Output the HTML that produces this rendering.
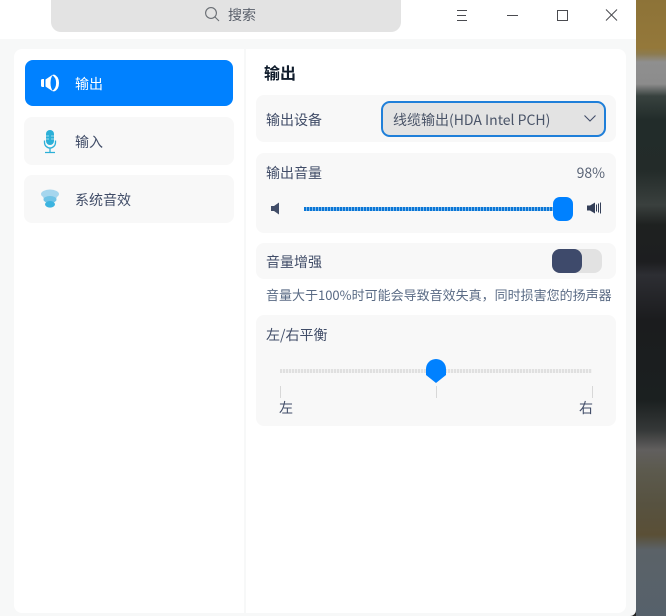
<!DOCTYPE html>
<html lang="zh"><head><meta charset="utf-8"><style>
html,body{margin:0;padding:0;width:666px;height:616px;overflow:hidden;background:#222}
*{box-sizing:border-box}
body{position:relative;font-family:"Noto Sans CJK SC","Liberation Sans",sans-serif;font-size:14px;color:#414d68}
.a{position:absolute}
.t{position:absolute;line-height:20px;white-space:nowrap}
.card{position:absolute;background:#f8f8f8;border-radius:8px}
#wall{left:636px;top:0;width:30px;height:616px;background:linear-gradient(180deg,#8d7338 0,#94783a 48px,#8c7b50 54px,#8f8f8f 62px,#8c8c8c 84px,#38423f 96px,#222c2a 120px,#232b29 170px,#3a403e 205px,#1e2120 225px,#1d1e20 262px,#2d2e33 275px,#1b1c1e 320px,#1b2020 400px,#353838 430px,#615f5e 450px,#5c5a4e 470px,#575240 505px,#5a4f36 535px,#5b6268 550px,#56616b 616px)}
</style></head><body>
<div class="a" id="wall"></div>
<div class="a" style="left:0;top:0;width:636px;height:616px;background:#f7f8f8;border-radius:0 0 6px 0"></div>
<div class="a" style="left:0;top:0;width:636px;height:39px;background:#fff"></div>
<div class="a" style="left:51px;top:0;width:350px;height:32px;background:#e3e3e3;border-radius:0 0 10px 10px"></div>
<svg class="a" style="left:204px;top:6px" width="16" height="16" viewBox="0 0 16 16" fill="none" stroke="#6a6e74" stroke-width="1.1"><circle cx="7" cy="7" r="5.4"/><path d="M11 11l4 4"/></svg>
<div class="t" style="left:228px;top:5px;color:#5a606b">搜索</div>
<svg class="a" style="left:450px;top:0" width="180" height="30" fill="none" stroke="#4a4b50" stroke-width="1"><path d="M7 10.500h10M7 15.500h9M7 20.500h10"/><path d="M57 15.500h11"/><path d="M107.500 10.500h10v10h-10z"/><path d="M156 9.500l11 11M167 9.500l-11 11"/></svg>

<div class="a" style="left:14px;top:49px;width:230px;height:564px;background:#fff;border-radius:8px 0 0 8px"></div>
<div class="a" style="left:246px;top:49px;width:380px;height:564px;background:#fff;border-radius:0 8px 8px 0"></div>

<div class="a" style="left:25px;top:60px;width:208px;height:46px;background:#0081ff;border-radius:8px"></div>
<svg class="a" style="left:40px;top:73px" width="20" height="20" viewBox="0 0 20 20"><path d="M1 7.500Q1 6 2.500 6H4v8H2.500Q1 14 1 12.500z" fill="#fff"/><path d="M5.500 6.500L13 1.500q-2.500 3.500-2.500 8.500t2.500 8.500L5.500 13.500z" fill="#fff"/><path d="M14 1.500q5 1.800 5 8.500t-5 8.500q-1.500-.3-1.500-1 3.600-2 3.600-7.500T12.500 2.500q0-.7 1.500-1z" fill="#fff"/></svg>
<div class="t" style="left:75px;top:74px;color:#fff">输出</div>

<div class="card" style="left:24px;top:117px;width:210px;height:48px"></div>
<svg class="a" style="left:43px;top:130px" width="14" height="24" viewBox="0 0 14 24" fill="none"><rect x="3" y="0" width="8" height="15" rx="4" fill="#2cb0d8"/><path d="M3 6h3M3 9h3M8 6h3M8 9h3" stroke="#bfe7f3" stroke-width=".8"/><path d="M1.500 10.500v2a5.500 5.500 0 0 0 11 0v-2" stroke="#2cb0d8" stroke-width="1.300"/><path d="M7 18v4M2 22.500h10" stroke="#2cb0d8" stroke-width="1.300"/></svg>
<div class="t" style="left:75px;top:132px">输入</div>

<div class="card" style="left:24px;top:175px;width:210px;height:48px"></div>
<svg class="a" style="left:40px;top:189px" width="20" height="20" viewBox="0 0 20 20"><ellipse cx="10" cy="5" rx="9" ry="4.500" fill="#a6d6ee"/><path d="M2 6h16l-2.500 5h-11z" fill="#a6d6ee"/><ellipse cx="10" cy="10.500" rx="6.500" ry="3.500" fill="#70c3e6"/><ellipse cx="10" cy="15.300" rx="5" ry="3.300" fill="#3cb4e0"/></svg>
<div class="t" style="left:75px;top:190px">系统音效</div>

<div class="t" style="left:264px;top:62px;font-size:16px;font-weight:700;color:#101c2c">输出</div>

<div class="card" style="left:256px;top:95px;width:360px;height:47px"></div>
<div class="t" style="left:266px;top:110px">输出设备</div>
<div class="a" style="left:381px;top:101px;width:225px;height:36px;background:#e3e3e3;border:2px solid #1f7fd9;border-radius:9px"></div>
<div class="t" style="left:393px;top:110px;color:#4a5468">线缆输出(HDA Intel PCH)</div>
<svg class="a" style="left:583px;top:114px" width="14" height="10" fill="none" stroke="#414d68" stroke-width="1.100"><path d="M1.500 1.500L7 7l5.500-5.500"/></svg>

<div class="card" style="left:256px;top:153px;width:360px;height:80px"></div>
<div class="t" style="left:266px;top:163px">输出音量</div>
<div class="t" style="right:61px;top:163px;color:#5b6577">98%</div>
<svg class="a" style="left:271px;top:202px" width="10" height="13" viewBox="0 0 10 13"><path d="M0 4h3l5-3.500v12L3 9H0z" fill="#414d68"/></svg>
<div class="a" style="left:304px;top:207px;width:252px;height:4px;background:repeating-linear-gradient(90deg,#0a76d6 0,#0a76d6 2px,#7db8ea 2px,#7db8ea 3px)"></div>
<div class="a" style="left:553px;top:197px;width:20px;height:24px;background:#0081ff;border-radius:7px"></div>
<svg class="a" style="left:587px;top:201px" width="15" height="14" viewBox="0 0 15 14" fill="none"><path d="M0 4.500h3L8 1.500v11L3 9.500H0z" fill="#343f58"/><path d="M9.500 3.500v7M11.500 2.500v9M13.500 1.500v11" stroke="#343f58" stroke-width="1"/></svg>

<div class="card" style="left:256px;top:243px;width:360px;height:36px"></div>
<div class="t" style="left:266px;top:252px">音量增强</div>
<div class="a" style="left:552px;top:249px;width:50px;height:24px;background:#e2e2e2;border-radius:8px"></div>
<div class="a" style="left:552px;top:249px;width:30px;height:24px;background:#3e4a6b;border-radius:8px"></div>
<div class="t" style="left:266px;top:285px;font-size:13px;color:#5a6b85">音量大于100%时可能会导致音效失真，同时损害您的扬声器</div>

<div class="card" style="left:256px;top:315px;width:360px;height:111px"></div>
<div class="t" style="left:266px;top:325px">左/右平衡</div>
<div class="a" style="left:280px;top:369px;width:312px;height:4px;background:repeating-linear-gradient(90deg,#e0e0e0 0,#e0e0e0 2px,#f2f2f2 2px,#f2f2f2 3px)"></div>
<svg class="a" style="left:425px;top:358px" width="22" height="26" viewBox="0 0 22 26"><path d="M1 11a10 10 0 0 1 20 0v6l-10 8-10-8z" fill="#0081ff"/></svg>
<div class="a" style="left:280px;top:386px;width:1px;height:12px;background:#d8d8d8"></div>
<div class="a" style="left:436px;top:386px;width:1px;height:12px;background:#d8d8d8"></div>
<div class="a" style="left:592px;top:386px;width:1px;height:12px;background:#d8d8d8"></div>
<div class="t" style="left:279px;top:398px">左</div>
<div class="t" style="left:579px;top:398px">右</div>
</body></html>
